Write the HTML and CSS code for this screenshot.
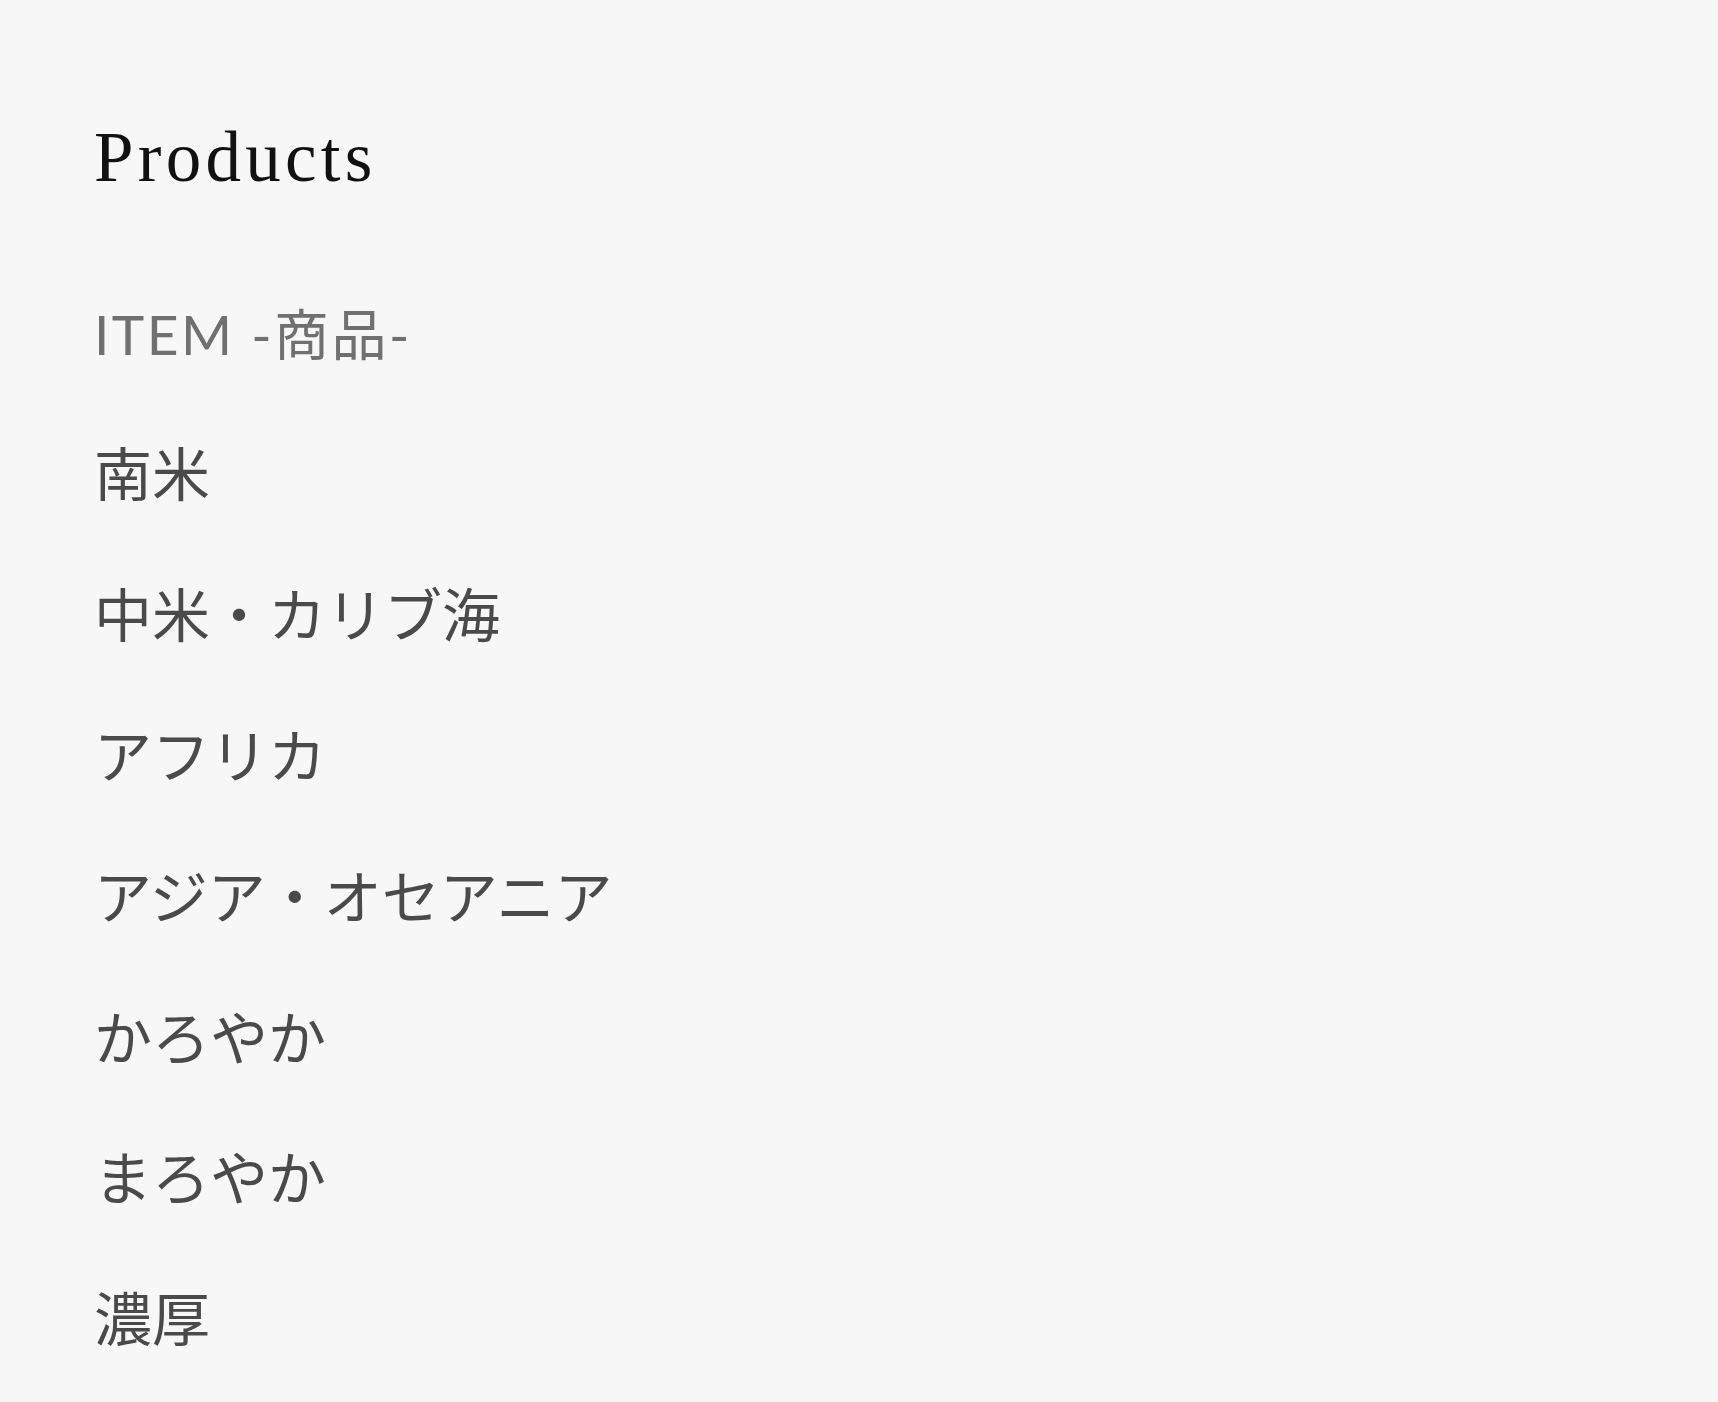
FILE: index.html
```html
<!DOCTYPE html>
<html lang="ja">
<head>
  <meta charset="UTF-8">
  <title>Products</title>
  <meta name="viewport" content="width=device-width, initial-scale=1.0" />
  <link rel="stylesheet" href="styles.css">
</head>
<body>

  <main class="products">
    <h1 class="products-title">Products</h1>

    <h2 class="item-heading">ITEM -商品-</h2>

    <ul class="item-list">
      <li><a href="#">南米</a></li>
      <li><a href="#">中米・カリブ海</a></li>
      <li><a href="#">アフリカ</a></li>
      <li><a href="#">アジア・オセアニア</a></li>
      <li><a href="#">かろやか</a></li>
      <li><a href="#">まろやか</a></li>
      <li><a href="#">濃厚</a></li>
    </ul>
  </main>

</body>
</html>
```

FILE: styles.css
```css
body {
  font-family: Lato, "Noto Sans CJK JP", sans-serif;
  background: #f7f7f7;
  margin: 0;
  padding: 0;
}

.products {
  padding: 108px 94px 40px;
}

.products-title {
  font-family: "Liberation Serif", serif;
  font-weight: normal;
  font-size: 71px;
  letter-spacing: 0.06em;
  color: #111;
  margin: 0;
  line-height: 1.4;
}

.item-heading {
  font-weight: normal;
  font-size: 55px;
  letter-spacing: 0.045em;
  color: #707070;
  margin: 89px 0 0;
  line-height: 1.4;
}

.item-list {
  list-style: none;
  margin: 60px 0 0;
  padding: 0;
}

.item-list li {
  font-size: 58px;
  line-height: 1.4;
  margin-bottom: 59.6px;
}

.item-list a {
  color: #4a4a4a;
  text-decoration: none;
}
```
